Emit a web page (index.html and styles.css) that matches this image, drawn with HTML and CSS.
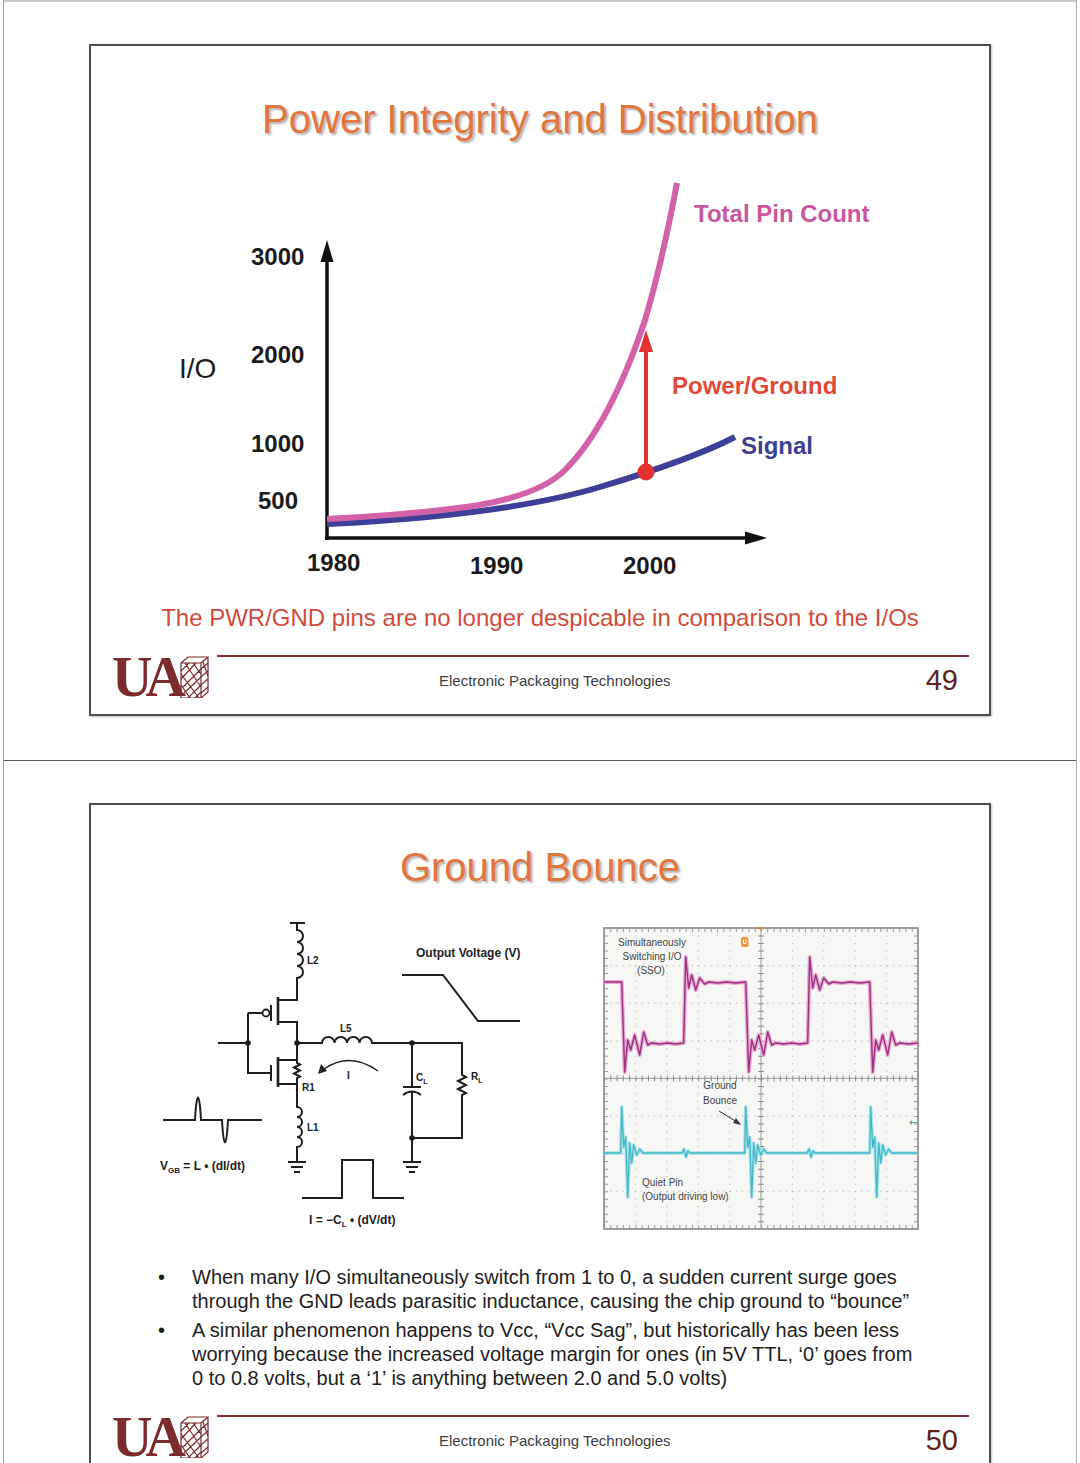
FILE: index.html
```html
<!DOCTYPE html>
<html lang="en">
<head>
<meta charset="utf-8">
<title>Power Integrity and Distribution</title>
<link rel="stylesheet" href="styles.css">
</head>
<body>
<div class="doc">
  <section class="sheet sheet-1">
    <div class="slide slide-1">
      <h1 class="title">Power Integrity and Distribution</h1>
      <svg class="chart" viewBox="150 170 740 420" xmlns="http://www.w3.org/2000/svg">
        <line class="axis" x1="327" y1="540" x2="327" y2="258"/>
        <line class="axis" x1="325" y1="538" x2="748" y2="538"/>
        <polygon points="327,240 320.5,262 333.5,262" fill="#111"/>
        <polygon points="767,538 745,531.5 745,544.5" fill="#111"/>
        <path class="curve-signal" d="M327,524 C450,518 540,505 600,487 C650,472 700,455 735,437"/>
        <path class="curve-total" d="M327,519 C450,512 530,505 565,470 C600,435 625,380 645,320 C660,270 670,220 677,183"/>
        <line class="pg-arrow" x1="646" y1="472" x2="646" y2="350"/>
        <polygon points="646,330 639,352 653,352" fill="#e3322f"/>
        <circle cx="646" cy="472" r="8.5" fill="#e3322f"/>
        <text class="ax-num" x="251" y="265">3000</text>
        <text class="ax-num" x="251" y="363">2000</text>
        <text class="ax-num" x="251" y="452">1000</text>
        <text class="ax-num" x="258" y="509">500</text>
        <text class="ax-label" x="179" y="378">I/O</text>
        <text class="ax-num" x="307" y="571">1980</text>
        <text class="ax-num" x="470" y="574">1990</text>
        <text class="ax-num" x="623" y="574">2000</text>
        <text class="lbl lbl-total" x="694" y="222">Total Pin Count</text>
        <text class="lbl lbl-pg" x="672" y="394">Power/Ground</text>
        <text class="lbl lbl-sig" x="741" y="454">Signal</text>
      </svg>
      <p class="caption">The PWR/GND pins are no longer despicable in comparison to the I/Os</p>
      <footer class="foot">
        <div class="logo">
          <span class="ua">UA</span>
          <svg class="bldg" viewBox="0 0 30 42" xmlns="http://www.w3.org/2000/svg">
            <path d="M2,7 L9,1 H29 V36 L22,42 H2 Z M2,7 H22 V42 M22,7 L29,1"/>
            <path d="M2,15 L10,7 M2,23 L17,7 M4,31 L22,13 M2,40 L22,21 M9,42 L22,29 M16,42 L22,36 M6,7 L22,31 M2,18 L20,42 M2,29 L11,42 M14,7 L22,18 M22,13 L29,7 M22,21 L29,15 M22,29 L29,23 M22,37 L29,31 M24,6 L29,20"/>
          </svg>
        </div>
        <div class="foot-main">
          <span class="foot-text">Electronic Packaging Technologies</span>
          <span class="page-num">49</span>
        </div>
      </footer>
    </div>
  </section>
  <section class="sheet sheet-2">
    <div class="slide slide-2">
      <h1 class="title">Ground Bounce</h1>
      <div class="figs">
        <svg class="circuit" viewBox="150 915 385 315" xmlns="http://www.w3.org/2000/svg">
          <g class="wire">
            <path d="M290,923 H305"/>
            <path d="M297,923 V930 a6,6 0 0 1 0,12 a6,6 0 0 1 0,12 a6,6 0 0 1 0,12 a6,6 0 0 1 0,12 V1000 H278"/>
            <path d="M278,1022 H297 V1063 l3,1.5 l-6,3 l6,3 l-6,3 l6,3 l-3,1.5 V1107 a5,5 0 0 1 0,10 a5,5 0 0 1 0,10 a5,5 0 0 1 0,10 a5,5 0 0 1 0,10 V1162"/>
            <path d="M278,1060 H297 M278,1084 H297"/>
            <path d="M271,1005 V1021 M271,1065 V1081"/>
            <path d="M248,1013 H262.5 M248,1013 V1073 H271 M218,1043 H248"/>
            <path d="M297,1043 H322 a6.25,6 0 0 1 12.5,0 a6.25,6 0 0 1 12.5,0 a6.25,6 0 0 1 12.5,0 a6.25,6 0 0 1 12.5,0 H462 V1075 l4,2 l-8,4 l8,4 l-8,4 l8,4 l-4,2 V1138 H412"/>
            <path d="M412,1043 V1087 M403,1087 H421 M403,1095 Q412,1088 421,1095 M412,1091.5 V1162"/>
            <path d="M288,1162 H306 M291,1167 H303 M294,1172 H300 M403,1162 H421 M406,1167 H418 M409,1172 H415"/>
            <path d="M163,1120 H195 C196.5,1090 199.5,1090 201,1120 H222 C223.5,1150 226.5,1150 228,1120 H262"/>
            <path d="M302,1198 H342 V1160 H373 V1198 H404"/>
            <path d="M402,975 H443 L478,1021 H520"/>
            <path class="thin" d="M378,1071 Q350,1051 324,1069"/>
          </g>
          <path class="chan" d="M278,997 V1025 M278,1057 V1087"/>
          <circle class="bubble" cx="266" cy="1013" r="3.5"/>
          <polygon points="318,1074 321,1064 327,1071" fill="#1e1e1e"/>
          <g fill="#1e1e1e">
            <circle cx="248" cy="1043" r="2.8"/>
            <circle cx="297" cy="1043" r="2.8"/>
            <circle cx="412" cy="1043" r="2.8"/>
            <circle cx="412" cy="1138" r="2.8"/>
          </g>
          <text class="cl" x="307" y="964">L2</text>
          <text class="cl" x="340" y="1032">L5</text>
          <text class="cl" x="302" y="1091">R1</text>
          <text class="cl" x="307" y="1131">L1</text>
          <text class="cl" x="347" y="1079">I</text>
          <text class="cl" x="416" y="1081">C<tspan font-size="7" dy="3">L</tspan></text>
          <text class="cl" x="471" y="1080">R<tspan font-size="7" dy="3">L</tspan></text>
          <text class="cl cl-big" x="160" y="1170">V<tspan font-size="8" dy="3">GB</tspan><tspan dy="-3"> = L • (dI/dt)</tspan></text>
          <text class="cl cl-big" x="309" y="1224">I = −C<tspan font-size="8" dy="3">L</tspan><tspan dy="-3"> • (dV/dt)</tspan></text>
          <text class="cl cl-big" x="416" y="957">Output Voltage (V)</text>
        </svg>
        <svg class="scope" viewBox="603 927 316 303" xmlns="http://www.w3.org/2000/svg">
          <rect x="604" y="928" width="314" height="301" fill="#f7f7f6" stroke="#7d7d7d" stroke-width="1.5"/>
          <g class="grid">
            <path d="M635.4,928 V1229 M666.8,928 V1229 M698.2,928 V1229 M729.6,928 V1229 M792.4,928 V1229 M823.8,928 V1229 M855.2,928 V1229 M886.6,928 V1229"/>
          </g>
          <g class="grid-h">
            <path d="M604,965.6 H918 M604,1003.2 H918 M604,1040.8 H918 M604,1116 H918 M604,1153.6 H918 M604,1191.2 H918"/>
          </g>
          <line class="ctr" x1="604" y1="1078.4" x2="918" y2="1078.4"/>
          <line class="ctr" x1="761" y1="928" x2="761" y2="1229"/>
          <line class="tick-h" x1="604" y1="1078.4" x2="918" y2="1078.4"/>
          <line class="tick-v" x1="761" y1="928" x2="761" y2="1229"/>
          <line class="edge-h" x1="604" y1="930" x2="918" y2="930"/>
          <line class="edge-h" x1="604" y1="1227" x2="918" y2="1227"/>
          <line class="edge-v" x1="606" y1="928" x2="606" y2="1229"/>
          <line class="edge-v" x1="916" y1="928" x2="916" y2="1229"/>
          <path class="sso-halo" d="M604,982 H621.7 l3,90 l3,-32 l3,10 l4,-15 l5,20 l4,-23 l4,13 l4,-2 l8,1 l8,-1 l8,1 l8,-1 l2,-86 l3,31 l3,-13 l4,15 l4,-12 l5,6 l4,-2 l9,1 l9,-1 l9,1 l10,-1 l3,90 l3,-32 l3,10 l4,-15 l5,20 l4,-23 l4,13 l4,-2 l8,1 l8,-1 l8,1 l8,-1 l2,-86 l3,31 l3,-13 l4,15 l4,-12 l5,6 l4,-2 l9,1 l9,-1 l9,1 l10,-1 l3,90 l3,-32 l3,10 l4,-15 l5,20 l4,-23 l4,13 l4,-2 l9,1 l9.3,-1"/>
          <path class="sso" d="M604,982 H621.7 l3,90 l3,-32 l3,10 l4,-15 l5,20 l4,-23 l4,13 l4,-2 l8,1 l8,-1 l8,1 l8,-1 l2,-86 l3,31 l3,-13 l4,15 l4,-12 l5,6 l4,-2 l9,1 l9,-1 l9,1 l10,-1 l3,90 l3,-32 l3,10 l4,-15 l5,20 l4,-23 l4,13 l4,-2 l8,1 l8,-1 l8,1 l8,-1 l2,-86 l3,31 l3,-13 l4,15 l4,-12 l5,6 l4,-2 l9,1 l9,-1 l9,1 l10,-1 l3,90 l3,-32 l3,10 l4,-15 l5,20 l4,-23 l4,13 l4,-2 l9,1 l9.3,-1"/>
          <path class="quiet-halo" d="M604,1153 H620.7 l1,-46 l2,40 l2,-10 l2,60 l2,-54 l2,20 l2,-18 l3,10 l3,-6 l3,4 H682 l2,-4 l2,8 l2,-6 l2,2 H744.7 l1,-46 l2,40 l2,-10 l2,60 l2,-54 l2,20 l2,-18 l3,10 l3,-6 l3,4 H807 l2,-4 l2,8 l2,-6 l2,2 H869.7 l1,-46 l2,40 l2,-10 l2,60 l2,-54 l2,20 l2,-18 l3,10 l3,-6 l3,4 H918"/>
          <path class="quiet" d="M604,1153 H620.7 l1,-46 l2,40 l2,-10 l2,60 l2,-54 l2,20 l2,-18 l3,10 l3,-6 l3,4 H682 l2,-4 l2,8 l2,-6 l2,2 H744.7 l1,-46 l2,40 l2,-10 l2,60 l2,-54 l2,20 l2,-18 l3,10 l3,-6 l3,4 H807 l2,-4 l2,8 l2,-6 l2,2 H869.7 l1,-46 l2,40 l2,-10 l2,60 l2,-54 l2,20 l2,-18 l3,10 l3,-6 l3,4 H918"/>
          <line x1="719" y1="1111" x2="737" y2="1122" stroke="#333" stroke-width="1"/>
          <polygon points="741,1125 733,1123 736,1118" fill="#333"/>
          <rect x="741" y="937" width="7.5" height="10" rx="2" fill="#e8973a"/>
          <path d="M743.5,939.5 V943.5 H746 V939.5" fill="none" stroke="#fff" stroke-width="1"/>
          <polygon points="757.5,927 764.5,927 761,931" fill="#e0943a"/>
          <text x="909" y="1126" class="mark">←</text>
          <text class="st" x="652" y="946" text-anchor="middle">Simultaneously</text>
          <text class="st" x="652" y="960" text-anchor="middle">Switching I/O</text>
          <text class="st" x="651" y="974" text-anchor="middle">(SSO)</text>
          <text class="st" x="720" y="1089" text-anchor="middle">Ground</text>
          <text class="st" x="720" y="1104" text-anchor="middle">Bounce</text>
          <text class="st" x="642" y="1186">Quiet Pin</text>
          <text class="st" x="642" y="1200">(Output driving low)</text>
        </svg>
      </div>
      <ul class="bullets">
        <li><span class="dot">•</span><span>When many I/O simultaneously switch from 1 to 0, a sudden current surge goes<br>through the GND leads parasitic inductance, causing the chip ground to “bounce”</span></li>
        <li><span class="dot">•</span><span>A similar phenomenon happens to Vcc, “Vcc Sag”, but historically has been less<br>worrying because the increased voltage margin for ones (in 5V TTL, ‘0’ goes from<br>0 to 0.8 volts, but a ‘1’ is anything between 2.0 and 5.0 volts)</span></li>
      </ul>
      <footer class="foot">
        <div class="logo">
          <span class="ua">UA</span>
          <svg class="bldg" viewBox="0 0 30 42" xmlns="http://www.w3.org/2000/svg">
            <path d="M2,7 L9,1 H29 V36 L22,42 H2 Z M2,7 H22 V42 M22,7 L29,1"/>
            <path d="M2,15 L10,7 M2,23 L17,7 M4,31 L22,13 M2,40 L22,21 M9,42 L22,29 M16,42 L22,36 M6,7 L22,31 M2,18 L20,42 M2,29 L11,42 M14,7 L22,18 M22,13 L29,7 M22,21 L29,15 M22,29 L29,23 M22,37 L29,31 M24,6 L29,20"/>
          </svg>
        </div>
        <div class="foot-main">
          <span class="foot-text">Electronic Packaging Technologies</span>
          <span class="page-num">50</span>
        </div>
      </footer>
    </div>
  </section>
</div>
</body>
</html>
```

FILE: styles.css
```css
html, body {
  margin: 0;
  padding: 0;
}

body {
  width: 1080px;
  height: 1463px;
  overflow: hidden;
  background: #ffffff;
  font-family: "Liberation Sans", Arial, sans-serif;
  color: #222;
}

.doc {
  margin-left: 3px;
  width: 1072px;
  height: 1461px;
  border-top: 2px solid #c9c9c9;
  border-left: 1px solid #9a9a9a;
  border-right: 1px solid #b0b0b0;
  overflow: hidden;
}

.sheet {
  box-sizing: border-box;
  padding-top: 42px;
}

.sheet-1 {
  height: 759px;
  border-bottom: 1px solid #5a5a5a;
}

.sheet-2 {
  height: 702px;
}

.slide {
  margin-left: 85px;
  width: 902px;
  box-sizing: border-box;
  border: 2px solid #4d4d4d;
  box-shadow: 1px 1px 2px rgba(0, 0, 0, 0.25);
  display: flex;
  flex-direction: column;
}

.slide-1 {
  height: 672px;
}

.slide-2 {
  height: 700px;
}

.title {
  margin: 50px 0 0;
  font-size: 40px;
  line-height: 46px;
  font-weight: normal;
  text-align: center;
  color: #e1763f;
  text-shadow: 2px 2px 2px rgba(110, 110, 110, 0.5);
}

.slide-2 .title {
  margin-top: 39px;
}

/* chart */
.chart {
  display: block;
  margin: 28px 0 0 59px;
  width: 740px;
  height: 420px;
}

.axis {
  stroke: #111;
  stroke-width: 3.5;
}

.curve-signal {
  fill: none;
  stroke: #3d3f98;
  stroke-width: 6;
}

.curve-total {
  fill: none;
  stroke: #d462a9;
  stroke-width: 6;
}

.pg-arrow {
  stroke: #e3322f;
  stroke-width: 4;
}

.ax-num {
  font-family: "Liberation Sans", Arial, sans-serif;
  font-weight: bold;
  font-size: 24px;
  fill: #1b1b1b;
}

.ax-label {
  font-family: "Liberation Sans", Arial, sans-serif;
  font-size: 28px;
  fill: #1b1b1b;
}

.lbl {
  font-family: "Liberation Sans", Arial, sans-serif;
  font-weight: bold;
  font-size: 24px;
}

.lbl-total { fill: #c9579f; }
.lbl-pg { fill: #e04a3a; }
.lbl-sig { fill: #3a3f8f; }

.caption {
  margin: 14px 0 0;
  text-align: center;
  font-size: 24px;
  line-height: 28px;
  color: #d24b3c;
}

/* footer */
.foot {
  display: flex;
  padding-left: 21px;
  margin-top: 23px;
}

.logo {
  width: 98px;
  height: 44px;
  display: flex;
  align-items: flex-end;
}

.ua {
  font-family: "Liberation Serif", "Times New Roman", serif;
  font-weight: bold;
  font-size: 56px;
  line-height: 44px;
  letter-spacing: -7px;
  color: #7b2b2b;
}

.bldg {
  width: 30px;
  height: 42px;
  margin-bottom: 1px;
  flex: none;
}

.bldg path {
  fill: none;
  stroke: #7b2b2b;
  stroke-width: 1.2;
}

.foot-main {
  margin-left: 7px;
  width: 752px;
  height: 46px;
  border-top: 2px solid #7b3535;
  display: flex;
  align-items: center;
}

.foot-text {
  margin-left: 222px;
  font-size: 15px;
  color: #3d3d3d;
}

.page-num {
  margin-left: auto;
  margin-right: 11px;
  font-size: 29px;
  color: #5c2323;
}

/* slide 2 figures */
.figs {
  display: flex;
  align-items: flex-start;
  margin-top: 25px;
}

.circuit {
  display: block;
  margin-left: 59px;
  width: 385px;
  height: 315px;
  flex: none;
}

.wire path {
  fill: none;
  stroke: #1e1e1e;
  stroke-width: 2;
}

.wire .thin {
  stroke-width: 1.4;
}

.chan {
  fill: none;
  stroke: #1e1e1e;
  stroke-width: 2.6;
}

.bubble {
  fill: #fff;
  stroke: #1e1e1e;
  stroke-width: 1.8;
}

.cl {
  font-family: "Liberation Sans", Arial, sans-serif;
  font-weight: bold;
  font-size: 10px;
  fill: #222;
}

.cl-big {
  font-size: 12px;
}

.scope {
  display: block;
  margin: 12px 0 0 68px;
  width: 316px;
  height: 303px;
  flex: none;
}

.grid path {
  fill: none;
  stroke: #a8a8a8;
  stroke-width: 1;
  stroke-dasharray: 1 6.52;
}

.grid-h path {
  fill: none;
  stroke: #a8a8a8;
  stroke-width: 1;
  stroke-dasharray: 1 5.28;
}

.ctr {
  stroke: #9a9a9a;
  stroke-width: 1;
}

.tick-h {
  stroke: #8a8a8a;
  stroke-width: 6;
  stroke-dasharray: 1 5.28;
}

.tick-v {
  stroke: #8a8a8a;
  stroke-width: 6;
  stroke-dasharray: 1 6.52;
}

.edge-h {
  stroke: #9a9a9a;
  stroke-width: 4;
  stroke-dasharray: 1 5.28;
}

.edge-v {
  stroke: #9a9a9a;
  stroke-width: 4;
  stroke-dasharray: 1 6.52;
}

.sso-halo {
  fill: none;
  stroke: #e8a9d4;
  stroke-width: 4;
  stroke-linejoin: round;
}

.sso {
  fill: none;
  stroke: #9c2f7e;
  stroke-width: 1.4;
  stroke-linejoin: round;
}

.quiet-halo {
  fill: none;
  stroke: #a9e2ea;
  stroke-width: 3.5;
  stroke-linejoin: round;
}

.quiet {
  fill: none;
  stroke: #3fb9c7;
  stroke-width: 1.3;
  stroke-linejoin: round;
}

.st {
  font-family: "Liberation Sans", Arial, sans-serif;
  font-size: 10px;
  fill: #444;
}

.mark {
  font-family: "DejaVu Sans", sans-serif;
  font-size: 10px;
  fill: #2e9a7c;
}

/* bullets */
.bullets {
  margin: 35px 0 0;
  padding: 0 0 0 67px;
  list-style: none;
  font-size: 20px;
  line-height: 24px;
  color: #1e1e1e;
}

.bullets li {
  display: flex;
  margin-bottom: 5px;
}

.dot {
  width: 34px;
  flex: none;
}

.slide-2 .foot {
  margin-top: 20px;
}
```
